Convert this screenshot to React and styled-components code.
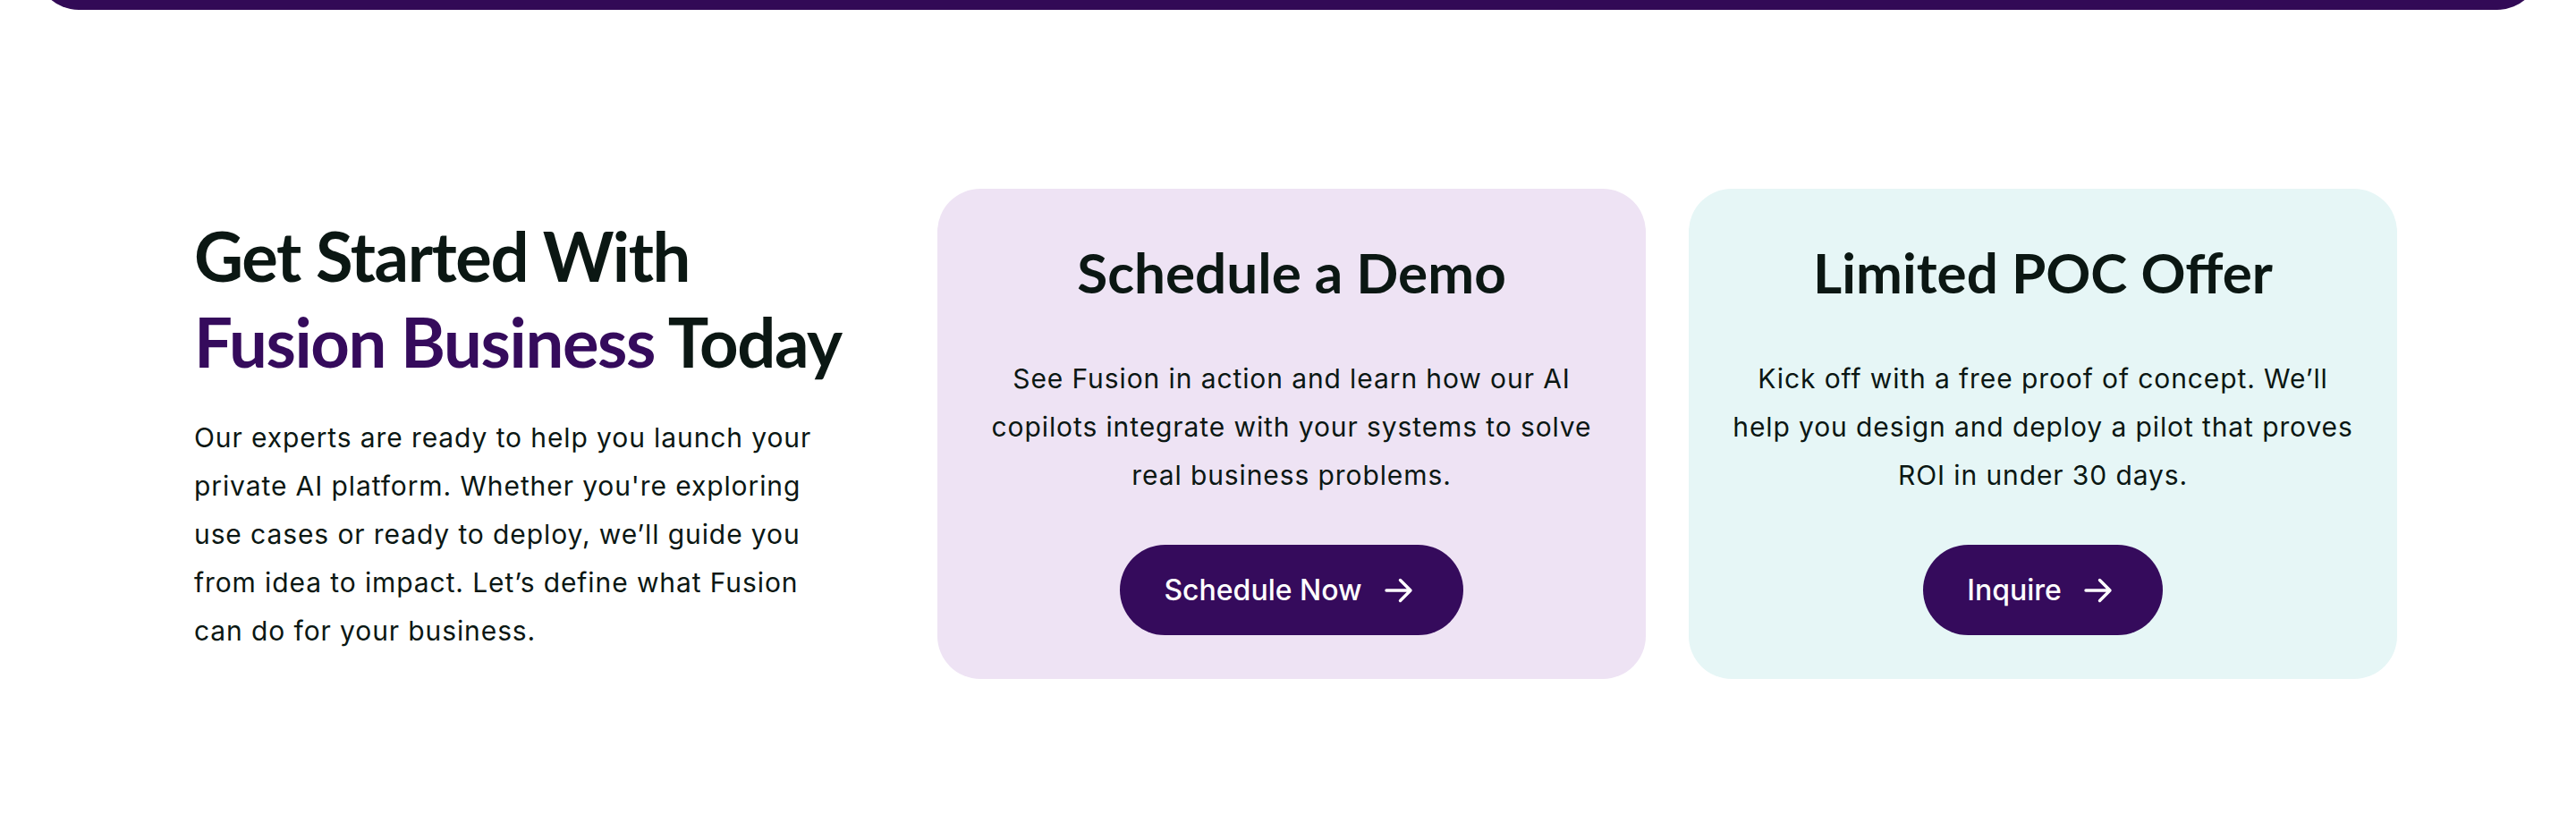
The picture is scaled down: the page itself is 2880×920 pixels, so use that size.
import React from 'react'
import styled, { createGlobalStyle } from 'styled-components'

const colours = {
  ink: '#0b1713',
  brand: '#350b5c',
  band: '#320a56',
  lavender: '#eee3f4',
  mint: '#e6f6f6',
  white: '#ffffff',
}

const fonts = {
  display: '"Lato", "Noto Sans", sans-serif',
  body: '"Inter", "Noto Sans", sans-serif',
}

const GlobalStyle = createGlobalStyle`
  html, body {
    margin: 0;
    padding: 0;
    background: ${colours.white};
  }

  body {
    font-family: ${fonts.body};
    color: ${colours.ink};
    -webkit-font-smoothing: antialiased;
  }

  * {
    box-sizing: border-box;
  }
`

const ArrowIcon = () => (
  <svg width="32" height="32" viewBox="0 0 32 32" fill="none" aria-hidden="true">
    <path
      d="M2 16h27M17.5 4.5 29 16 17.5 27.5"
      stroke="currentColor"
      strokeWidth="3.4"
      strokeLinecap="round"
      strokeLinejoin="round"
    />
  </svg>
)

const offers = [
  {
    title: 'Schedule a Demo',
    text: 'See Fusion in action and learn how our AI copilots integrate with your systems to solve real business problems.',
    action: 'Schedule Now',
    tone: colours.lavender,
  },
  {
    title: 'Limited POC Offer',
    text: 'Kick off with a free proof of concept. We’ll help you design and deploy a pilot that proves ROI in under 30 days.',
    action: 'Inquire',
    tone: colours.mint,
  },
]

const App = () => (
  <>
    <GlobalStyle />
    <Page>
      <TopBand>
        <BandShape />
      </TopBand>

      <Section>
        <Intro>
          <Heading>
            Get Started With
            <br />
            <Accent>Fusion Business</Accent> Today
          </Heading>
          <Lead>
            Our experts are ready to help you launch your private AI platform. Whether you're exploring use cases or
            ready to deploy, we’ll guide you from idea to impact. Let’s define what Fusion can do for your business.
          </Lead>
        </Intro>

        {offers.map((offer) => (
          <Card key={offer.title} $tone={offer.tone}>
            <CardTitle>{offer.title}</CardTitle>
            <CardText>{offer.text}</CardText>
            <Button type="button">
              {offer.action}
              <ArrowIcon />
            </Button>
          </Card>
        ))}
      </Section>
    </Page>
  </>
)

const Page = styled.main`
  min-height: 920px;
  background: ${colours.white};
`

// only the rounded bottom of the hero above peeks into view
const TopBand = styled.div`
  height: 11px;
  overflow: hidden;
  display: flex;
  align-items: flex-end;
  padding: 0 40px;
`

const BandShape = styled.div`
  flex: 1;
  height: 96px;
  background: ${colours.band};
  border-radius: 0 0 48px 48px;
`

const Section = styled.section`
  display: grid;
  grid-template-columns: 1fr 792px 792px;
  gap: 48px;
  align-items: center;
  padding: 200px 200px 0;
`

const Intro = styled.div`
  display: flex;
  flex-direction: column;
  padding-left: 17px;
`

const Heading = styled.h2`
  margin: 0;
  font-family: ${fonts.display};
  font-weight: 700;
  font-size: 76px;
  line-height: 96px;
  letter-spacing: -1.4px;
  color: ${colours.ink};
`

const Accent = styled.span`
  color: ${colours.brand};
`

const Lead = styled.p`
  margin: 32px 0 0;
  max-width: 716px;
  font-size: 30px;
  line-height: 54px;
  letter-spacing: 0.9px;
  font-weight: 400;
  color: ${colours.ink};
`

const Card = styled.article`
  display: flex;
  flex-direction: column;
  align-items: center;
  padding: 56px 40px 49px;
  border-radius: 48px;
  background: ${(p) => p.$tone};
  text-align: center;
`

const CardTitle = styled.h3`
  margin: 0;
  font-family: ${fonts.display};
  font-weight: 700;
  font-size: 62px;
  line-height: 74px;
  letter-spacing: 0;
  color: ${colours.ink};
`

const CardText = styled.p`
  margin: 55px 0 51px;
  max-width: 708px;
  font-size: 30px;
  line-height: 54px;
  letter-spacing: 0.9px;
  color: ${colours.ink};
`

const Button = styled.button`
  display: inline-flex;
  align-items: center;
  gap: 25px;
  height: 101px;
  padding: 0 56px 0 49px;
  border: 0;
  border-radius: 999px;
  background: ${colours.brand};
  color: ${colours.white};
  font-family: ${fonts.body};
  font-size: 32px;
  font-weight: 500;
  cursor: pointer;
`

export default App
